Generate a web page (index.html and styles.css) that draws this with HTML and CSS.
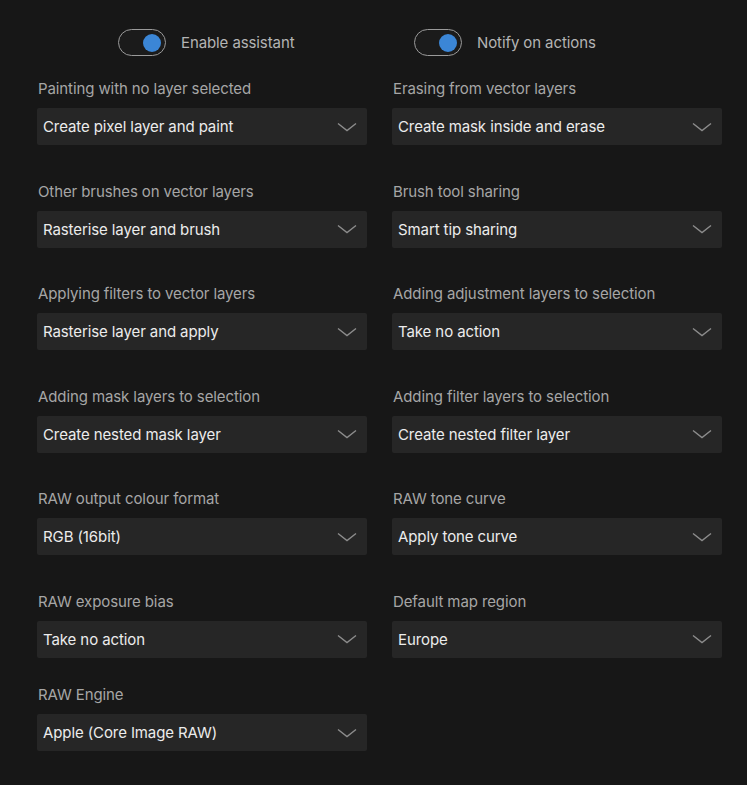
FILE: index.html
```html
<!DOCTYPE html>
<html lang="en">
<head>
<meta charset="utf-8">
<title>Assistant settings</title>
<link rel="stylesheet" href="styles.css">
</head>
<body>
<div class="page">
  <div class="toggles">
    <label class="toggle-item first">
      <span class="switch"><span class="knob"></span></span>
      <span class="toggle-label">Enable assistant</span>
    </label>
    <label class="toggle-item second">
      <span class="switch"><span class="knob"></span></span>
      <span class="toggle-label">Notify on actions</span>
    </label>
  </div>
  <div class="grid">
    <div class="field"><div class="label">Painting with no layer selected</div><div class="select"><span>Create pixel layer and paint</span><svg class="chev" viewBox="0 0 20 10"><path d="M1 1.5 L10 8.5 L19 1.5"/></svg></div></div>
    <div class="field"><div class="label">Erasing from vector layers</div><div class="select"><span>Create mask inside and erase</span><svg class="chev" viewBox="0 0 20 10"><path d="M1 1.5 L10 8.5 L19 1.5"/></svg></div></div>
    <div class="field"><div class="label">Other brushes on vector layers</div><div class="select"><span>Rasterise layer and brush</span><svg class="chev" viewBox="0 0 20 10"><path d="M1 1.5 L10 8.5 L19 1.5"/></svg></div></div>
    <div class="field"><div class="label">Brush tool sharing</div><div class="select"><span>Smart tip sharing</span><svg class="chev" viewBox="0 0 20 10"><path d="M1 1.5 L10 8.5 L19 1.5"/></svg></div></div>
    <div class="field"><div class="label">Applying filters to vector layers</div><div class="select"><span>Rasterise layer and apply</span><svg class="chev" viewBox="0 0 20 10"><path d="M1 1.5 L10 8.5 L19 1.5"/></svg></div></div>
    <div class="field"><div class="label">Adding adjustment layers to selection</div><div class="select"><span>Take no action</span><svg class="chev" viewBox="0 0 20 10"><path d="M1 1.5 L10 8.5 L19 1.5"/></svg></div></div>
    <div class="field"><div class="label">Adding mask layers to selection</div><div class="select"><span>Create nested mask layer</span><svg class="chev" viewBox="0 0 20 10"><path d="M1 1.5 L10 8.5 L19 1.5"/></svg></div></div>
    <div class="field"><div class="label">Adding filter layers to selection</div><div class="select"><span>Create nested filter layer</span><svg class="chev" viewBox="0 0 20 10"><path d="M1 1.5 L10 8.5 L19 1.5"/></svg></div></div>
    <div class="field"><div class="label">RAW output colour format</div><div class="select"><span>RGB (16bit)</span><svg class="chev" viewBox="0 0 20 10"><path d="M1 1.5 L10 8.5 L19 1.5"/></svg></div></div>
    <div class="field"><div class="label">RAW tone curve</div><div class="select"><span>Apply tone curve</span><svg class="chev" viewBox="0 0 20 10"><path d="M1 1.5 L10 8.5 L19 1.5"/></svg></div></div>
    <div class="field"><div class="label">RAW exposure bias</div><div class="select"><span>Take no action</span><svg class="chev" viewBox="0 0 20 10"><path d="M1 1.5 L10 8.5 L19 1.5"/></svg></div></div>
    <div class="field"><div class="label">Default map region</div><div class="select"><span>Europe</span><svg class="chev" viewBox="0 0 20 10"><path d="M1 1.5 L10 8.5 L19 1.5"/></svg></div></div>
    <div class="field last"><div class="label">RAW Engine</div><div class="select"><span>Apple (Core Image RAW)</span><svg class="chev" viewBox="0 0 20 10"><path d="M1 1.5 L10 8.5 L19 1.5"/></svg></div></div>
  </div>
</div>
</body>
</html>
```
FILE: styles.css
```css
html, body {
  margin: 0;
  padding: 0;
  background: #171717;
}
body {
  font-family: Inter, "Open Sans", "Liberation Sans", sans-serif;
  font-size: 15px;
  color: #e8e8e8;
  width: 747px;
  height: 785px;
  overflow: hidden;
}
.page {
  padding: 29px 25px 0 37px;
}
.toggles {
  display: grid;
  grid-template-columns: 330px 330px;
  column-gap: 25px;
  height: 27px;
}
.toggle-item {
  display: flex;
  align-items: center;
  gap: 15px;
}
.toggle-item.first { padding-left: 81px; }
.toggle-item.second { padding-left: 22px; }
.switch {
  box-sizing: border-box;
  width: 48px;
  height: 27px;
  border: 1.5px solid #9a9a9a;
  border-radius: 14px;
  background: #1b1b1b;
  display: flex;
  align-items: center;
  justify-content: flex-end;
  padding-right: 4px;
}
.knob {
  width: 18px;
  height: 18px;
  border-radius: 50%;
  background: #3b86d6;
}
.toggle-label {
  color: #b4b4b4;
  letter-spacing: -0.1px;
}
.grid {
  display: grid;
  grid-template-columns: 330px 330px;
  column-gap: 25px;
  row-gap: 36.5px;
  margin-top: 23px;
}
.field {
  display: flex;
  flex-direction: column;
  gap: 9px;
}
.field.last { margin-top: -9px; }
.label {
  color: #a6a6a6;
  line-height: 20px;
  padding-left: 1px;
  letter-spacing: -0.1px;
}
.select {
  height: 37px;
  background: #262626;
  border-radius: 2px;
  display: flex;
  align-items: center;
  justify-content: space-between;
  padding: 0 10px 0 6px;
  color: #ececec;
  letter-spacing: -0.1px;
}
.chev {
  width: 20px;
  height: 10px;
  fill: none;
  stroke: #8c8c8c;
  stroke-width: 1.4;
}
```
